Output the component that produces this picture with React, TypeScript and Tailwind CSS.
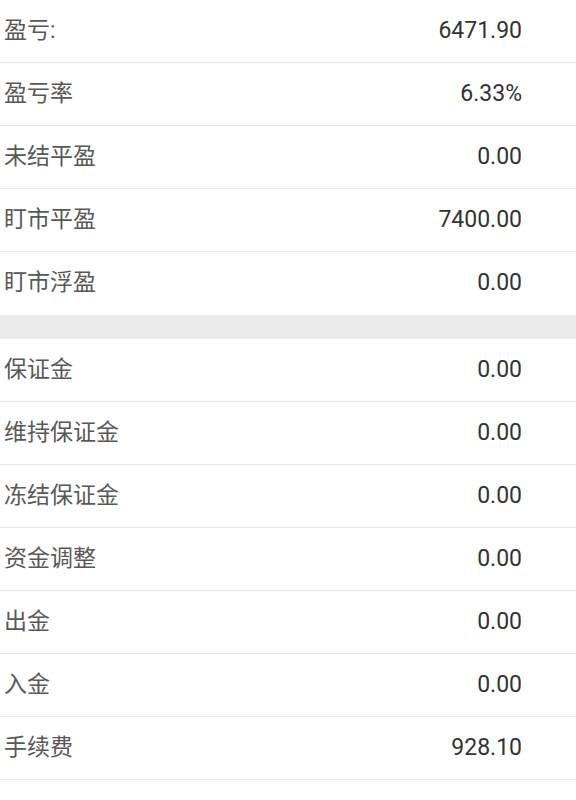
const topRows = [
  { label: '盈亏:', value: '6471.90' },
  { label: '盈亏率', value: '6.33%' },
  { label: '未结平盈', value: '0.00' },
  { label: '盯市平盈', value: '7400.00' },
  { label: '盯市浮盈', value: '0.00' },
]

const bottomRows = [
  { label: '保证金', value: '0.00' },
  { label: '维持保证金', value: '0.00' },
  { label: '冻结保证金', value: '0.00' },
  { label: '资金调整', value: '0.00' },
  { label: '出金', value: '0.00' },
  { label: '入金', value: '0.00' },
  { label: '手续费', value: '928.10' },
]

function Row({ label, value, last }: { label: string; value: string; last?: boolean }) {
  return (
    <div
      className={`flex h-[63px] items-center justify-between pl-[4px] pr-[54px] ${last ? '' : 'border-b border-[#e6e6e6]'}`}
    >
      <span className="font-['Roboto','Noto_Sans_CJK_SC',sans-serif] text-[23px] text-[#585858]">
        {label}
      </span>
      <span className="font-['Roboto',sans-serif] text-[23px] text-[#333333]">{value}</span>
    </div>
  )
}

export default function App() {
  return (
    <div className="h-[800px] w-[576px] overflow-hidden bg-white">
      {topRows.map((row, i) => (
        <Row key={row.label} {...row} last={i === topRows.length - 1} />
      ))}
      <div className="h-[24px] bg-[#ebebeb]" />
      {bottomRows.map((row) => (
        <Row key={row.label} {...row} />
      ))}
    </div>
  )
}
